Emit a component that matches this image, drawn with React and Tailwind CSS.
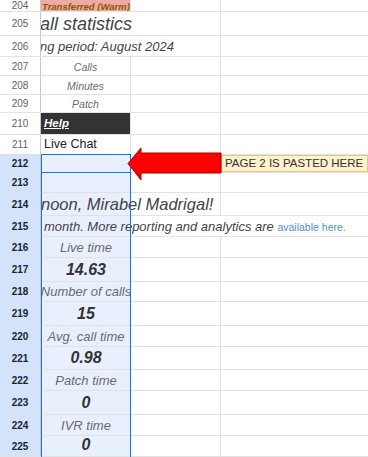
import React from "react";

// one spreadsheet row: header number, then col A, col B, col C (clipped at the header edge)
const Row = ({ n, h, sel, aCls = "", a, lineA = true, lineB = true, c, cCls = "" }) => (
  <div className={`flex ${h} border-b border-[#e2e2e2]`}>
    <div
      className={`w-[41px] shrink-0 flex items-center justify-center border-r border-[#c7c7c7] text-[10px] ${
        sel ? "bg-[#d3e3fd] font-bold text-[#1f1f1f]" : "bg-white text-[#5f6368]"
      }`}
    >
      {n}
    </div>
    <div className="flex flex-1 min-w-0 overflow-hidden">
      <div className={`w-[90px] shrink-0 flex items-end ${lineA ? "border-r border-[#e2e2e2]" : ""} ${aCls}`}>{a}</div>
      <div className={`w-[90px] shrink-0 ${lineB ? "border-r border-[#e2e2e2]" : ""}`} />
      <div className={`flex-1 flex ${cCls}`}>{c}</div>
    </div>
  </div>
);

const Label = ({ children }) => (
  <span className="whitespace-nowrap shrink-0 pb-[3px] text-[13px] leading-none italic text-[#6b6b6b]">{children}</span>
);

const Value = ({ children }) => (
  <span className="whitespace-nowrap shrink-0 pb-[3px] text-[16px] leading-none font-bold italic text-[#333333]">{children}</span>
);

const Small = ({ children }) => (
  <span className="whitespace-nowrap pb-[3px] text-[10.5px] leading-none italic text-[#6b6b6b]">{children}</span>
);

export default function App() {
  const selA = "bg-[#e8f0fe] justify-center";

  return (
    <div className="relative w-[368px] h-[457px] overflow-hidden bg-white font-['Liberation_Sans',Arial,sans-serif]">
      <Row
        n={204}
        h="h-[12px]"
        aCls="bg-[#f2a9a4] items-center"
        a={
          <span className="whitespace-nowrap pl-[1px] text-[9.5px] leading-none font-bold italic text-[#7f6000]">
            Transferred (Warm)
          </span>
        }
      />
      <Row
        n={205}
        h="h-[24px]"
        lineA={false}
        a={
          <span className="ml-[-14px] shrink-0 whitespace-nowrap pb-[2px] text-[18px] leading-none italic text-[#434343]">
            Call statistics
          </span>
        }
      />
      <Row
        n={206}
        h="h-[21px]"
        lineA={false}
        a={
          <span className="ml-[-43px] shrink-0 whitespace-nowrap pb-[3px] text-[13px] leading-none italic text-[#434343]">
            Reporting period: August 2024
          </span>
        }
      />
      <Row n={207} h="h-[19px]" aCls="justify-center" a={<Small>Calls</Small>} />
      <Row n={208} h="h-[19px]" aCls="justify-center" a={<Small>Minutes</Small>} />
      <Row n={209} h="h-[18px]" aCls="justify-center" a={<Small>Patch</Small>} />
      <Row
        n={210}
        h="h-[22px]"
        aCls="bg-[#333333]"
        a={<span className="pl-[3px] pb-[5px] text-[11.5px] leading-none font-bold italic underline text-white">Help</span>}
      />
      <Row
        n={211}
        h="h-[20px]"
        a={<span className="pl-[3px] pb-[4px] text-[12.5px] leading-none text-[#222222]">Live Chat</span>}
      />
      <Row
        n={212}
        h="h-[18px]"
        sel
        lineA={false}
        aCls={selA}
        cCls="bg-[#fff2cc] border border-[#e6c58c] items-center"
        c={<span className="whitespace-nowrap pl-[3px] text-[11.5px] leading-none text-[#333333]">PAGE 2 IS PASTED HERE</span>}
      />
      <Row n={213} h="h-[20px]" sel lineA={false} aCls={selA} />
      <Row
        n={214}
        h="h-[23px]"
        sel
        lineA={false}
        aCls="bg-[#e8f0fe]"
        a={
          <span className="ml-[-78px] shrink-0 whitespace-nowrap pb-[3px] text-[16.5px] leading-none italic text-[#434343]">
            Good afternoon, Mirabel Madrigal!
          </span>
        }
      />
      <Row
        n={215}
        h="h-[21px]"
        sel
        lineA={false}
        lineB={false}
        aCls="bg-[#e8f0fe]"
        a={
          <span className="shrink-0 whitespace-nowrap pl-[3px] pb-[3px] text-[13px] leading-none italic text-[#434343]">
            month. More reporting and analytics are{" "}
            <span className="not-italic text-[10.5px] text-[#4a8fe0]">available here.</span>
          </span>
        }
      />
      <Row n={216} h="h-[21px]" sel lineA={false} aCls={selA} a={<Label>Live time</Label>} />
      <Row n={217} h="h-[24px]" sel lineA={false} aCls={selA} a={<Value>14.63</Value>} />
      <Row n={218} h="h-[20px]" sel lineA={false} aCls={selA} a={<Label>Number of calls</Label>} />
      <Row n={219} h="h-[24px]" sel lineA={false} aCls={selA} a={<Value>15</Value>} />
      <Row n={220} h="h-[21px]" sel lineA={false} aCls={selA} a={<Label>Avg. call time</Label>} />
      <Row n={221} h="h-[23px]" sel lineA={false} aCls={selA} a={<Value>0.98</Value>} />
      <Row n={222} h="h-[21px]" sel lineA={false} aCls={selA} a={<Label>Patch time</Label>} />
      <Row n={223} h="h-[24px]" sel lineA={false} aCls={selA} a={<Value>0</Value>} />
      <Row n={224} h="h-[21px]" sel lineA={false} aCls={selA} a={<Label>IVR time</Label>} />
      <Row n={225} h="h-[21px]" sel lineA={false} aCls={selA} a={<Value>0</Value>} />

      {/* selected range + active cell */}
      <div className="pointer-events-none absolute left-[41px] top-[154px] w-[90px] h-[320px] border border-[#1a73e8]" />
      <div className="pointer-events-none absolute left-[41px] top-[154px] w-[90px] h-[19px] border border-[#1a73e8]" />

      {/* red arrow */}
      <svg className="absolute left-[127px] top-[147px] z-20" width="95" height="34" viewBox="0 0 95 34">
        <polygon points="1,16.5 14,1 14,6 94,6 94,26 14,26 14,33" fill="#ff0000" stroke="#a80000" strokeWidth="1" />
      </svg>
    </div>
  );
}
